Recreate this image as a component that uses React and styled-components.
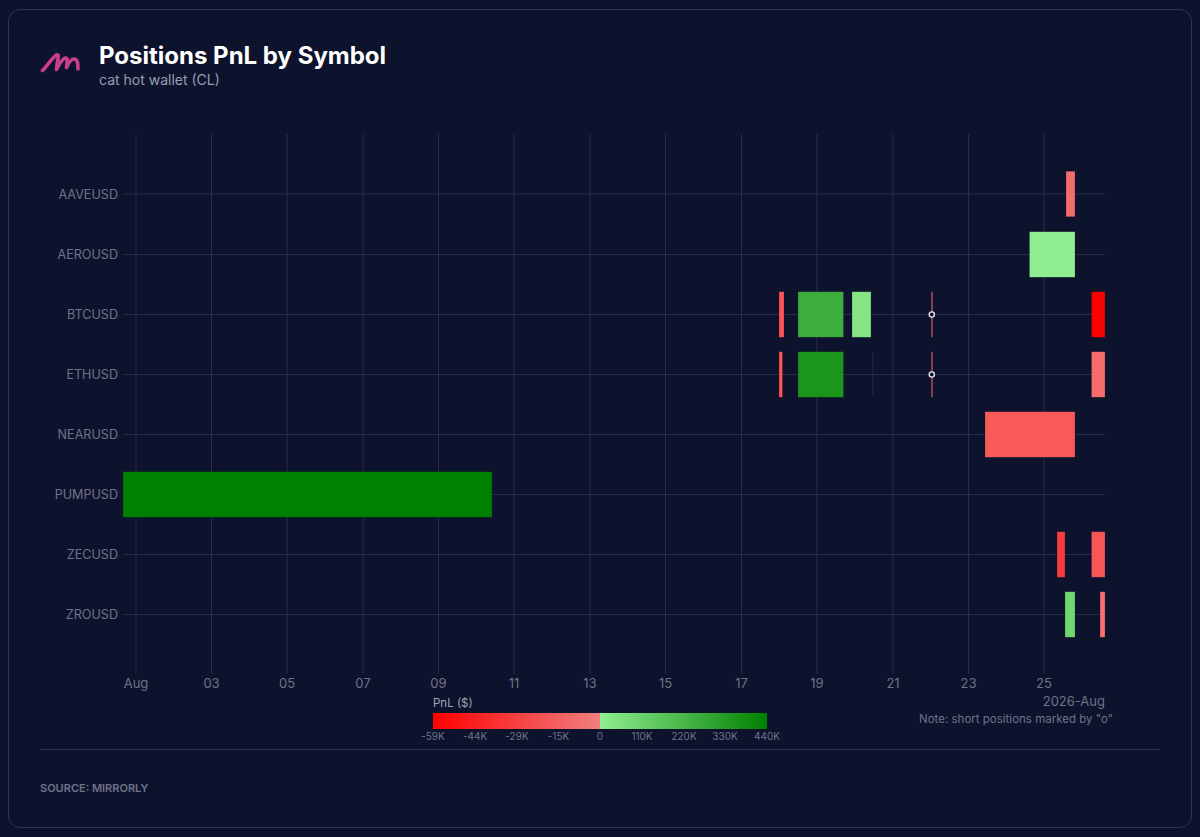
import React from 'react'
import styled, { createGlobalStyle } from 'styled-components'

const GlobalStyle = createGlobalStyle`
  html, body {
    margin: 0;
    background: #0e132d;
    font-family: Inter, "Liberation Sans", sans-serif;
  }
`

const Card = styled.div`
  box-sizing: border-box;
  margin: 9px 8px 0;
  height: 819px;
  padding: 0 31px;
  background: #0e132d;
  border: 1px solid #2d3659;
  border-radius: 12px;
  display: flex;
  flex-direction: column;
`

const Header = styled.header`
  display: flex;
  align-items: flex-start;
  gap: 18px;
  height: 120px;
  padding-top: 31px;
  box-sizing: border-box;
`

const Logo = styled.svg`
  width: 41px;
  height: 22px;
  flex: none;
  margin-top: 10px;
`

const Title = styled.h1`
  margin: 0 0 1px;
  font-size: 24px;
  line-height: 29px;
  font-weight: 700;
  color: #ffffff;
`

const Subtitle = styled.div`
  font-size: 14px;
  line-height: 17px;
  color: #9a9db0;
`

const Chart = styled.svg`
  display: block;
  width: 1120px;
  height: 619px;
  flex: none;
`

const AxisText = styled.text`
  font-family: Inter, "Liberation Sans", sans-serif;
  font-size: ${props => props.size || 13}px;
  fill: ${props => props.color || '#6f7288'};
`

const Footer = styled.footer`
  border-top: 1px solid #2a2f4a;
  padding-top: 32px;
  font-size: 11px;
  line-height: 13px;
  font-weight: 600;
  color: #6f7288;
`

const symbols = ['AAVEUSD', 'AEROUSD', 'BTCUSD', 'ETHUSD', 'NEARUSD', 'PUMPUSD', 'ZECUSD', 'ZROUSD']
const rowY = [194, 254.5, 314.5, 374.5, 434.5, 494.5, 554.5, 614.5]
const ticks = [
  ['Aug', 136], ['03', 211.5], ['05', 287], ['07', 363], ['09', 438.5], ['11', 514], ['13', 590],
  ['15', 665.5], ['17', 741.5], ['19', 817], ['21', 893], ['23', 968.5], ['25', 1044],
]
const bars = [
  [0, 1066, 1075, '#f46d6d'],
  [1, 1029.5, 1075, '#90ee90'],
  [2, 779, 784, '#fb5555'],
  [2, 798, 843.5, '#3cae3c'],
  [2, 852, 871, '#85e585'],
  [2, 931.3, 932.7, '#d96a70'],
  [2, 1091.5, 1105, '#ff0000'],
  [3, 779, 782.5, '#fb5555'],
  [3, 798, 843.5, '#1a961a'],
  [3, 872.4, 873.4, '#2a3048'],
  [3, 931.2, 932.8, '#c0555c'],
  [3, 1091.5, 1105, '#f66c6c'],
  [4, 985, 1075, '#f85a5a'],
  [5, 123, 492, '#008000'],
  [6, 1057, 1065, '#f93b3b'],
  [6, 1091.5, 1105, '#f85555'],
  [7, 1065, 1075, '#70d870'],
  [7, 1100, 1105, '#f67070'],
]
const shorts = [[931.8, 314.5], [931.8, 374.5]]
const scale = [
  ['-59K', 433], ['-44K', 475], ['-29K', 517], ['-15K', 558.5], ['0', 600],
  ['110K', 642], ['220K', 684], ['330K', 725], ['440K', 767],
]

const PnlChart = () => (
  <Chart viewBox="40 130 1120 619">
    <defs>
      <linearGradient id="pnl">
        <stop offset="0" stopColor="#ff0000" />
        <stop offset="0.5" stopColor="#f08080" />
        <stop offset="0.5" stopColor="#90ee90" />
        <stop offset="1" stopColor="#008000" />
      </linearGradient>
    </defs>

    {ticks.map(([label, x]) => (
      <g key={label}>
        <line x1={x} x2={x} y1={134} y2={674} stroke="#282d49" />
        <AxisText x={x} y={688} textAnchor="middle">{label}</AxisText>
      </g>
    ))}
    {symbols.map((name, i) => (
      <g key={name}>
        <line x1={123} x2={1105} y1={rowY[i]} y2={rowY[i]} stroke="#282d49" />
        <AxisText x={118} y={rowY[i] + 4.5} textAnchor="end" size={12.6}>{name}</AxisText>
      </g>
    ))}

    {bars.map(([row, x1, x2, color]) => (
      <rect
        key={`${row}-${x1}`}
        x={x1}
        y={rowY[row] - 22.75}
        width={x2 - x1}
        height={45.5}
        fill={color}
        stroke="#0e132d"
        strokeOpacity="0.35"
        strokeWidth="0.6"
      />
    ))}
    {shorts.map(([x, y]) => (
      <circle key={y} cx={x} cy={y} r={2.6} fill="#0e132d" stroke="#e4e6f0" strokeWidth="1.4" />
    ))}

    <AxisText x={1105} y={706} textAnchor="end">2026-Aug</AxisText>
    <AxisText x={1113} y={723} textAnchor="end" size={11.5}>Note: short positions marked by "o"</AxisText>

    <AxisText x={433} y={707} size={11.5} color="#a0a3b5">PnL ($)</AxisText>
    <rect x={433} y={713} width={334} height={16} fill="url(#pnl)" />
    {scale.map(([label, x]) => (
      <AxisText key={label} x={x} y={740} textAnchor="middle" size={10}>{label}</AxisText>
    ))}
  </Chart>
)

export default function App() {
  return (
    <>
      <GlobalStyle />
      <Card>
        <Header>
          <Logo viewBox="0 0 41 22">
            <path
              d="M2.5 19.5 C7 15 12 7 16.5 4 C19 3 18.5 6 17.5 10 L16.5 18.5 C19 14 21 9 25 7 C28 6.5 27.5 10 26.5 16.5 C28.5 12 31 8 34 8 C37.5 8 38 12 38 18"
              fill="none"
              stroke="#c93f8e"
              strokeWidth="3.6"
              strokeLinecap="round"
              strokeLinejoin="round"
            />
          </Logo>
          <div>
            <Title>Positions PnL by Symbol</Title>
            <Subtitle>cat hot wallet (CL)</Subtitle>
          </div>
        </Header>
        <PnlChart />
        <Footer>SOURCE: MIRRORLY</Footer>
      </Card>
    </>
  )
}
